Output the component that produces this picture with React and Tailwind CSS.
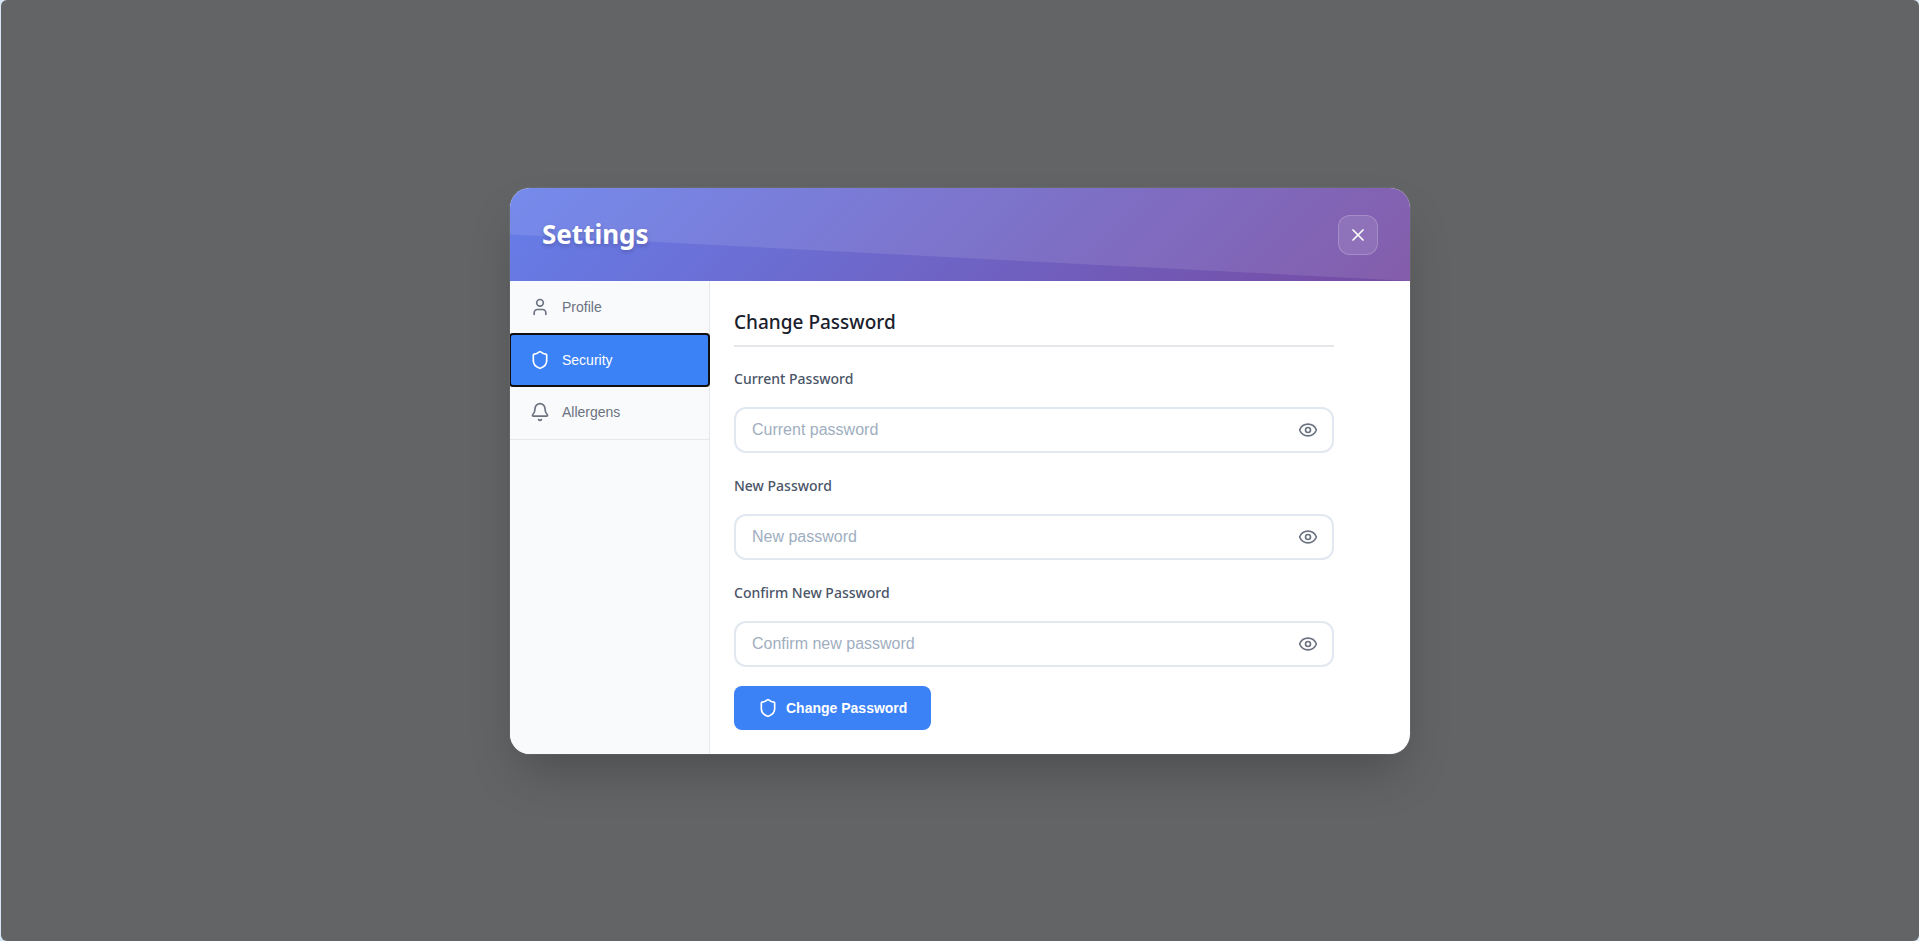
import { useState } from "react";
import { Bell, Eye, Shield, User, X } from "lucide-react";

const tabs = [
  { label: "Profile", icon: User },
  { label: "Security", icon: Shield },
  { label: "Allergens", icon: Bell },
];

const fields = [
  { id: "current-password", label: "Current Password", placeholder: "Current password" },
  { id: "new-password", label: "New Password", placeholder: "New password" },
  { id: "confirm-password", label: "Confirm New Password", placeholder: "Confirm new password" },
];

function PasswordField({ id, label, placeholder }) {
  const [visible, setVisible] = useState(false);
  return (
    <div className="flex flex-col gap-4">
      <label htmlFor={id} className="text-sm leading-6 font-medium text-[#4a5568]">
        {label}
      </label>
      <div className="flex h-[46px] items-center rounded-xl border-2 border-[#e2e8f0] bg-white pr-3.5 pl-4">
        <input
          id={id}
          type={visible ? "text" : "password"}
          placeholder={placeholder}
          className="min-w-0 flex-1 bg-transparent font-['Liberation_Sans',Arial,sans-serif] text-base text-[#2d3748] outline-none placeholder:text-[#a0aec0]"
        />
        <button type="button" aria-label={"Show " + placeholder} onClick={() => setVisible(!visible)} className="text-[#6b7280]">
          <Eye size={20} />
        </button>
      </div>
    </div>
  );
}

export default function App() {
  const [active, setActive] = useState("Security");
  return (
    <div className="flex min-h-screen bg-[#d6e6f4] pl-px font-['Noto_Sans','Open_Sans',sans-serif]">
      <div className="flex flex-1 items-center justify-center rounded-md bg-[#636466] pt-px">
        <div
          role="dialog"
          aria-labelledby="settings-title"
          className="w-full max-w-[900px] overflow-hidden rounded-[20px] bg-white shadow-2xl ring-1 ring-white/5"
        >
          <header className="relative bg-[linear-gradient(135deg,#667eea_0%,#764ba2_100%)] px-8 py-6">
            <div className="pointer-events-none absolute inset-0 bg-white/10 [clip-path:polygon(0_0,100%_0,100%_100%,0_50%)]" />
            <div className="relative flex items-center justify-between">
              <h1 id="settings-title" className="text-[26px] leading-[45px] font-bold text-white [text-shadow:0_2px_4px_rgba(0,0,0,0.2)]">
                Settings
              </h1>
              <button
                type="button"
                aria-label="Close"
                className="flex size-10 items-center justify-center rounded-xl border border-white/20 bg-white/10 text-white"
              >
                <X size={20} />
              </button>
            </div>
          </header>
          <div className="flex">
            <nav className="w-[200px] shrink-0 border-r border-[#e5e7eb] bg-[#f9fafb] font-['Liberation_Sans',Arial,sans-serif]">
              <div className="flex h-[159px] flex-col border-b border-[#e5e7eb]">
                {tabs.map(({ label, icon: Icon }) => (
                  <button
                    key={label}
                    type="button"
                    onClick={() => setActive(label)}
                    className={
                      "flex h-[53px] items-center gap-3 px-5 pb-px text-sm " +
                      (active === label
                        ? "rounded-[3px] bg-[#3b82f6] text-white outline-2 -outline-offset-1 outline-[#101010]"
                        : "text-[#6b7280]")
                    }
                  >
                    <Icon size={20} />
                    {label}
                  </button>
                ))}
              </div>
            </nav>
            <main className="min-w-0 flex-1 p-6">
              <form className="max-w-[600px]" onSubmit={(e) => e.preventDefault()}>
                <h2 className="mb-5 border-b-2 border-[#e5e7eb] pb-1.5 text-[19px] leading-[34px] font-medium text-[#1a202c]">
                  Change Password
                </h2>
                <div className="flex flex-col gap-[21px]">
                  {fields.map((field) => (
                    <PasswordField key={field.id} {...field} />
                  ))}
                </div>
                <button
                  type="submit"
                  className="mt-[19px] flex h-11 items-center gap-2 rounded-lg bg-[#3b82f6] px-6 font-['Liberation_Sans',Arial,sans-serif] text-sm font-bold text-white"
                >
                  <Shield size={20} />
                  Change Password
                </button>
              </form>
            </main>
          </div>
        </div>
      </div>
    </div>
  );
}
